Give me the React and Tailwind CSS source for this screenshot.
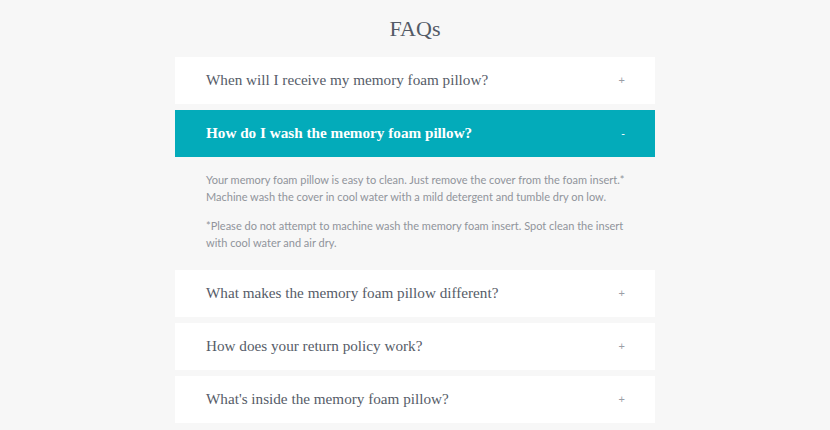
import React, { useState } from 'react';

const faqs = [
  { q: 'When will I receive my memory foam pillow?' },
  {
    q: 'How do I wash the memory foam pillow?',
    a: [
      'Your memory foam pillow is easy to clean. Just remove the cover from the foam insert.* Machine wash the cover in cool water with a mild detergent and tumble dry on low.',
      '*Please do not attempt to machine wash the memory foam insert. Spot clean the insert with cool water and air dry.',
    ],
  },
  { q: 'What makes the memory foam pillow different?' },
  { q: 'How does your return policy work?' },
  { q: "What's inside the memory foam pillow?" },
];

export default function App() {
  const [open, setOpen] = useState(1);

  return (
    <div className="min-h-[430px] w-full bg-[#f7f7f7] pt-[14px]">
      <h1 className="text-center font-['Liberation_Serif',serif] text-[22px] leading-[30px] text-[#535a66]">
        FAQs
      </h1>
      <div className="mx-auto mt-[13px] flex w-[480px] flex-col gap-[6px]">
        {faqs.map((item, i) => {
          const isOpen = open === i;
          return (
            <div key={i}>
              <button
                onClick={() => setOpen(isOpen ? -1 : i)}
                className={`flex h-[47px] w-full items-center justify-between pl-[31px] pr-[30px] text-left ${
                  isOpen ? 'bg-[#03abba] text-white' : 'bg-white text-[#565c68]'
                }`}
              >
                <span className={`font-['Liberation_Serif',serif] text-[15.2px] ${isOpen ? 'font-bold' : ''}`}>
                  {item.q}
                </span>
                <span className={`font-['Liberation_Sans',sans-serif] text-[11px] ${isOpen ? 'text-white' : 'text-[#9a9ea6]'}`}>
                  {isOpen ? '-' : '+'}
                </span>
              </button>
              {isOpen && item.a && (
                <div className="flex flex-col gap-[13px] pl-[31px] pr-[28px] pt-[15px] pb-[13px] font-['Lato',sans-serif] text-[11px] leading-[16.5px] text-[#90949b]">
                  {item.a.map((p, j) => (
                    <p key={j}>{p}</p>
                  ))}
                </div>
              )}
            </div>
          );
        })}
      </div>
    </div>
  );
}
